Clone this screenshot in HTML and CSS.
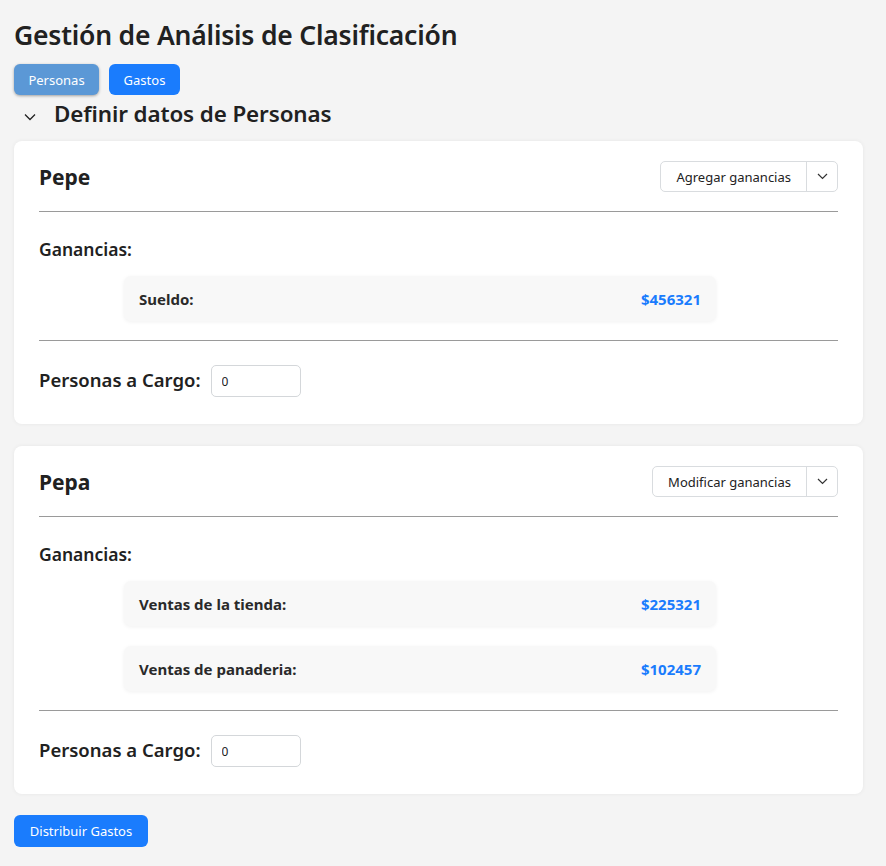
FILE: index.html
```html
<!DOCTYPE html>
<html lang="es">
<head>
<meta charset="utf-8">
<title>Gestión de Análisis de Clasificación</title>
<link rel="stylesheet" href="styles.css">
</head>
<body>
<h1 class="title">Gestión de Análisis de Clasificación</h1>
<div class="tabs">
  <button class="btn btn-tab active">Personas</button>
  <button class="btn btn-tab">Gastos</button>
</div>
<div class="section-head">
  <svg class="chev" width="12" height="8" viewBox="0 0 12 8"><path d="M1 1.5 L6 6.5 L11 1.5" fill="none" stroke="#222" stroke-width="1.3"/></svg>
  <h2>Definir datos de Personas</h2>
</div>

<div class="card">
  <div class="card-head">
    <h3>Pepe</h3>
    <div class="split">
      <span class="split-main">Agregar ganancias</span>
      <span class="split-caret"><svg width="11" height="7" viewBox="0 0 11 7"><path d="M1 1 L5.5 5.5 L10 1" fill="none" stroke="#333" stroke-width="1.2"/></svg></span>
    </div>
  </div>
  <hr class="sep">
  <div class="label">Ganancias:</div>
  <div class="items">
    <div class="item"><span class="item-name">Sueldo:</span><span class="item-val">$456321</span></div>
  </div>
  <hr class="sep sep-b">
  <div class="dep">
    <span class="dep-label">Personas a Cargo:</span>
    <input class="dep-input" type="text" value="0">
  </div>
</div>

<div class="card">
  <div class="card-head">
    <h3>Pepa</h3>
    <div class="split">
      <span class="split-main">Modificar ganancias</span>
      <span class="split-caret"><svg width="11" height="7" viewBox="0 0 11 7"><path d="M1 1 L5.5 5.5 L10 1" fill="none" stroke="#333" stroke-width="1.2"/></svg></span>
    </div>
  </div>
  <hr class="sep">
  <div class="label">Ganancias:</div>
  <div class="items">
    <div class="item"><span class="item-name">Ventas de la tienda:</span><span class="item-val">$225321</span></div>
    <div class="item"><span class="item-name">Ventas de panaderia:</span><span class="item-val">$102457</span></div>
  </div>
  <hr class="sep sep-b">
  <div class="dep">
    <span class="dep-label">Personas a Cargo:</span>
    <input class="dep-input" type="text" value="0">
  </div>
</div>

<button class="btn btn-primary">Distribuir Gastos</button>
</body>
</html>
```
FILE: styles.css
```css
* { box-sizing: border-box; }
body {
  margin: 0;
  padding: 18px 23px 0 14px;
  background: #f4f4f4;
  font-family: "Noto Sans", "Open Sans", sans-serif;
  color: #212121;
}
.title {
  margin: 0;
  font-size: 26.5px;
  font-weight: 600;
  line-height: 34px;
  letter-spacing: -0.2px;
}
.tabs {
  display: flex;
  gap: 10px;
  margin-top: 12px;
}
.btn {
  font-family: inherit;
  border: none;
  border-radius: 6px;
  color: #fff;
  background: #1a7cfd;
  font-size: 13px;
  height: 31px;
  padding: 0 10px;
  cursor: pointer;
}
.btn-tab { width: 71px; padding: 0; }
.btn-tab.active {
  background: #5b98d6;
  box-shadow: 0 1px 3px rgba(0,0,0,0.35);
  width: 85px;
}
.section-head {
  display: flex;
  align-items: center;
  gap: 18px;
  padding-left: 10px;
  margin-top: 2px;
  height: 34px;
}
.chev { margin-top: 6px; }
.section-head h2 {
  margin: 0;
  font-size: 22.4px;
  font-weight: 600;
  line-height: 30px;
  letter-spacing: -0.1px;
}
.card {
  background: #fff;
  border-radius: 8px;
  box-shadow: 0 0 4px rgba(0,0,0,0.06);
  padding: 20px 25px 27px 25px;
  margin-top: 10px;
  margin-bottom: 22px;
}
.card + .card { margin-top: 0; }
.card-head {
  display: flex;
  justify-content: space-between;
  align-items: center;
  height: 31px;
}
.card-head h3 {
  margin: 0;
  font-size: 21px;
  font-weight: 700;
}
.split {
  display: flex;
  height: 31px;
  border: 1px solid #d9dcdf;
  border-radius: 5px;
  font-size: 13px;
  color: #222;
}
.split-main {
  display: flex;
  align-items: center;
  padding: 0 15px;
}
.split-caret {
  display: flex;
  align-items: center;
  justify-content: center;
  width: 31px;
  border-left: 1px solid #d9dcdf;
}
.sep {
  border: none;
  border-top: 1px solid #9a9a9a;
  margin: 19px 0 0 0;
}
.label {
  margin-top: 25px;
  font-size: 17.5px;
  font-weight: 600;
  line-height: 24px;
}
.items {
  display: flex;
  flex-direction: column;
  gap: 20px;
  margin: 15px 0 0 85px;
  width: 592px;
}
.item {
  display: flex;
  justify-content: space-between;
  align-items: center;
  height: 45px;
  padding: 0 15px;
  background: #f8f8f8;
  border-radius: 7px;
  box-shadow: 0 1px 4px rgba(0,0,0,0.06);
  font-size: 15px;
  font-weight: 700;
}
.item-name { color: #2a2a2a; }
.item-val { color: #1a7cfd; }
.sep-b { margin-top: 19px; }
.dep {
  display: flex;
  align-items: center;
  gap: 10px;
  margin-top: 24px;
}
.dep-label {
  font-size: 18.5px;
  font-weight: 600;
  margin-top: -4px;
}
.dep-input {
  width: 90px;
  height: 32px;
  border: 1px solid #d4d7da;
  border-radius: 5px;
  font-family: inherit;
  font-size: 12px;
  padding: 0 10px;
  color: #222;
}
.btn-primary {
  width: 134px;
  height: 32px;
  padding: 0;
  margin-top: -1px;
}
```
